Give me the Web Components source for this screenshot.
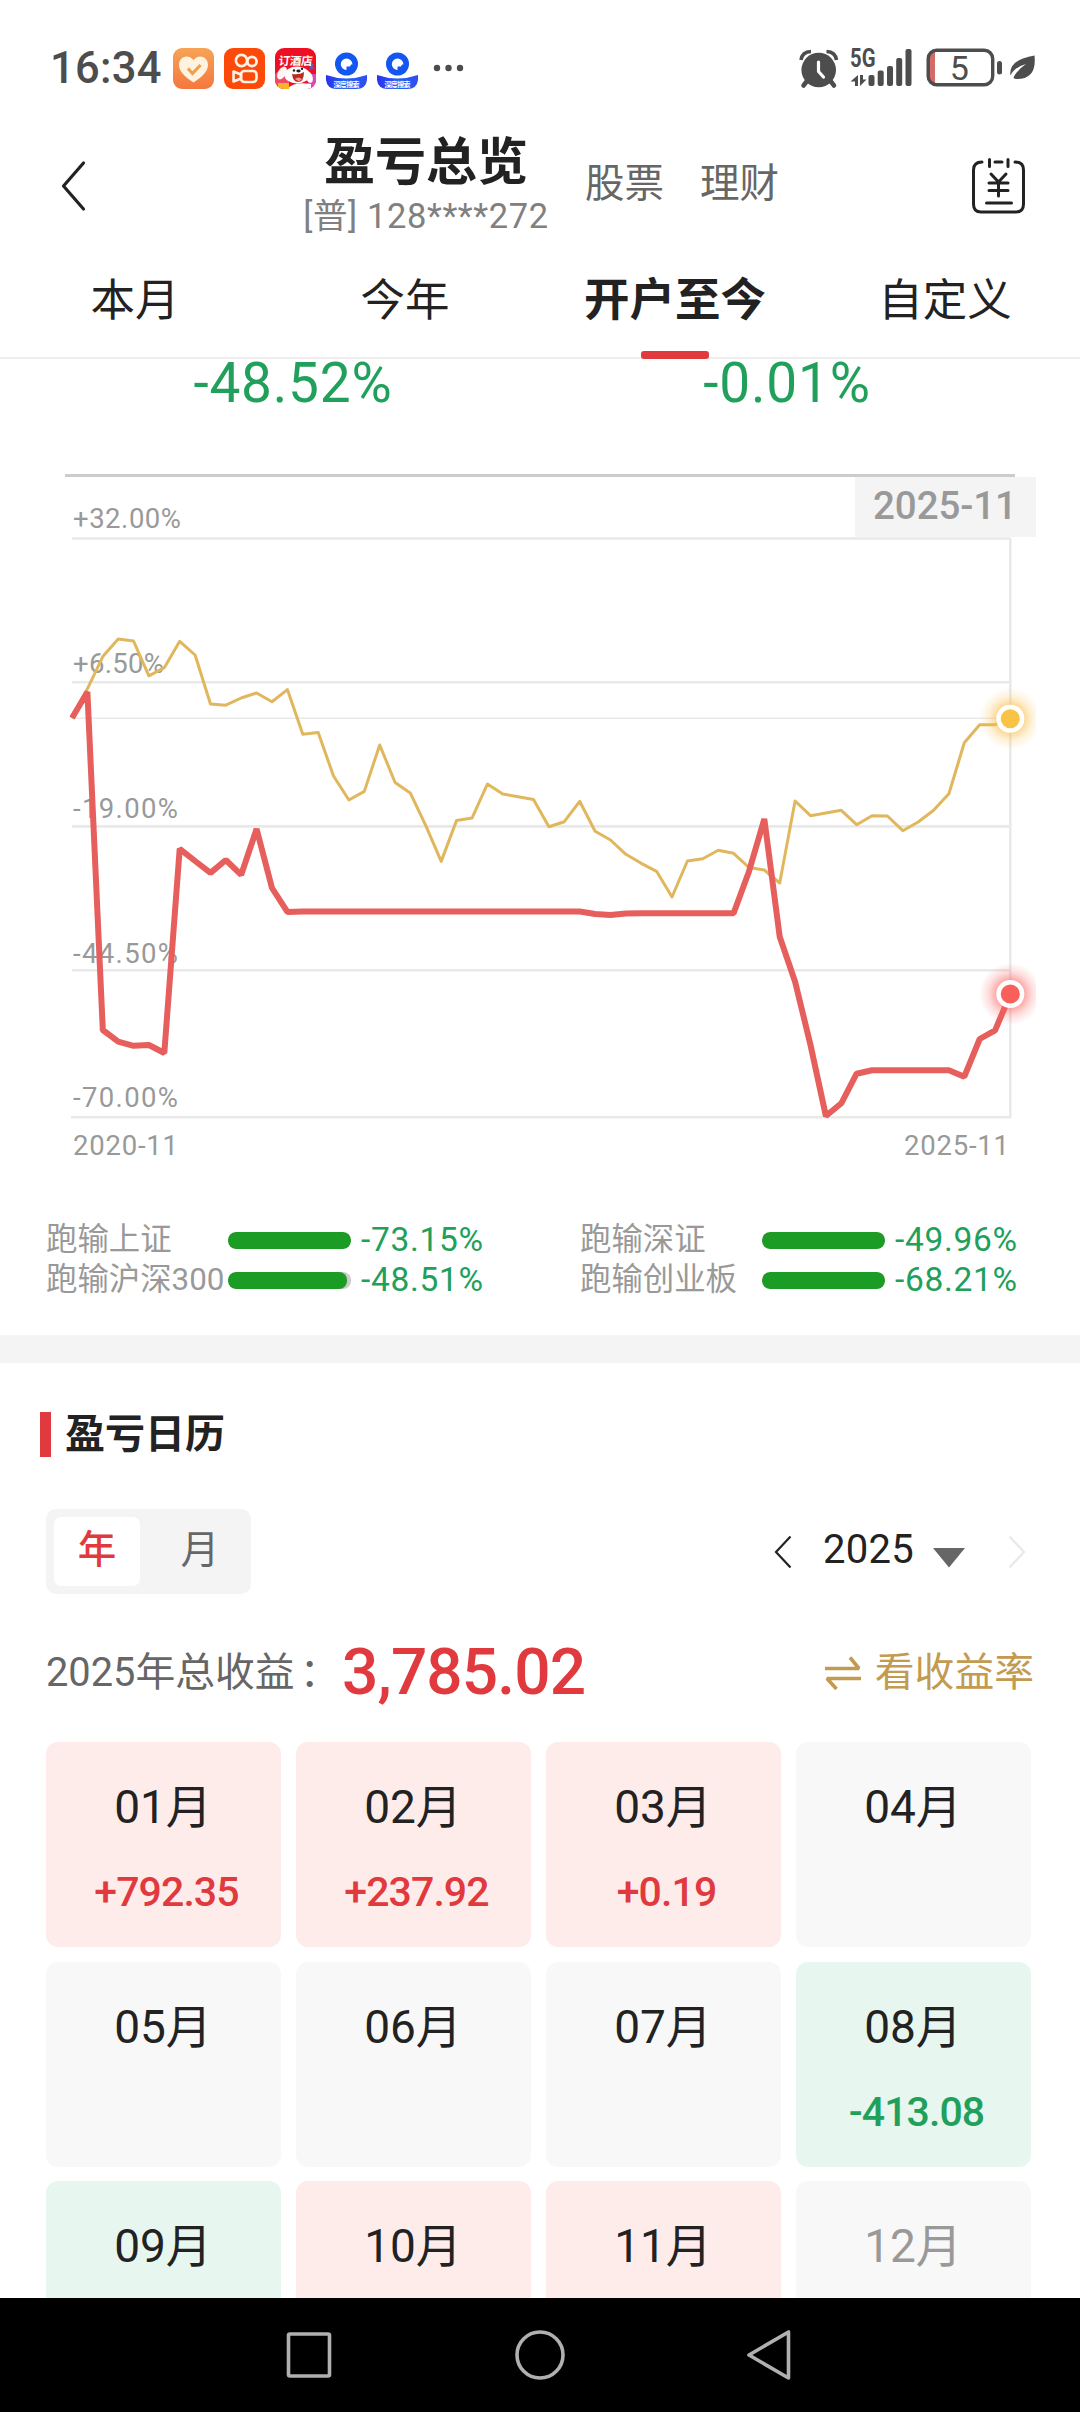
<!DOCTYPE html>
<html lang="zh-CN">
<head>
<meta charset="utf-8">
<title>盈亏总览</title>
<style>
  html, body {
    margin: 0;
    padding: 0;
  }
  body {
    width: 1080px;
    height: 2412px;
    overflow: hidden;
    background: #fff;
    color: #222;
    font-family: Roboto, "Noto Sans CJK SC", sans-serif;
    --red: #e0393e;
    --green: #21a05b;
    --gray: #999;
  }
</style>
</head>
<body>
<profit-app></profit-app>

<script>
// shared base: every element only supplies its markup
class BaseElement extends HTMLElement {
  connectedCallback() {
    if (this.shadowRoot) return;
    this.attachShadow({ mode: 'open' });
    this.shadowRoot.innerHTML = this.render();
  }
}

class AppBadge extends BaseElement {
  render() {
    const icons = {
      heart: `
        <defs><linearGradient id="g" x1="0" y1="0" x2="0" y2="1"><stop offset="0" stop-color="#f7a356"/><stop offset="1" stop-color="#f4783f"/></linearGradient></defs>
        <rect width="41" height="41" rx="9" fill="url(#g)"/>
        <path d="M20.5 34.5C15 31 6 24.500 6 17C6 12 9.500 8.500 13.500 8.500C16.500 8.500 19 10 20.500 12.300C22 10 24.500 8.500 27.500 8.500C31.500 8.500 35 12 35 17C35 24.500 26 31 20.500 34.500Z" fill="#fff3e0"/>
        <path d="M15 20.500l4.500 5L27.500 17" fill="none" stroke="#f0a04c" stroke-width="3.200"/>`,
      video: `
        <rect width="41" height="41" rx="9" fill="#fd4a08"/>
        <g fill="none" stroke="#fff3e6" stroke-width="2.600">
          <circle cx="17.500" cy="12.500" r="5.600"/><circle cx="28" cy="13.500" r="4.600"/>
          <rect x="17" y="23" width="15.500" height="11" rx="3.500"/>
          <path d="M9.500 23.500v10l7.500-3v-4z" stroke-linejoin="round"/>
        </g>`,
      hotel: `
        <defs><clipPath id="c"><rect width="41" height="41" rx="9"/></clipPath></defs>
        <g clip-path="url(#c)">
          <rect width="41" height="41" fill="#ee1022"/>
          <path d="M0 26Q6 20 14 22V41H0Z" fill="#f24a62"/>
          <path d="M33 26h8v15h-8z" fill="#d84bb0"/>
          <ellipse cx="22" cy="27" rx="12.500" ry="8.500" fill="#fff"/>
          <ellipse cx="7" cy="25" rx="4" ry="7" transform="rotate(30 7 25)" fill="#fff5f5"/>
          <ellipse cx="34" cy="29" rx="3.500" ry="6" transform="rotate(-20 34 29)" fill="#fff"/>
          <path d="M12 41q7-8 24-5v5z" fill="#fff"/>
          <path d="M17 26q8 1 12-2q0 10-6 10q-5 0-6-8z" fill="#b92b22"/>
          <path d="M20 31q3-3 7 0l-3 2.500z" fill="#f59a8a"/>
          <circle cx="19" cy="22.500" r="1.200" fill="#222"/><circle cx="27" cy="20.800" r="1.200" fill="#222"/><ellipse cx="23.500" cy="23" rx="2.200" ry="1.400" fill="#222"/>
          <path d="M3 35h11v6H3z" fill="#f7b52c"/>
          <path d="M34 17l5 4M38 16l-3 6" stroke="#5a63c8" stroke-width="1.500"/>
          <text x="20" y="17" text-anchor="middle" font-size="11.500" font-weight="700" textLength="34" fill="#fff" transform="skewX(-6) translate(2 0)">订酒店</text>
        </g>`,
      search: `
        <defs><linearGradient id="s" x1="0" y1="0" x2="1" y2="0"><stop offset="0" stop-color="#2a31ee"/><stop offset=".5" stop-color="#2563f2"/><stop offset="1" stop-color="#2f4df0"/></linearGradient></defs>
        <circle cx="20.500" cy="16" r="11.500" fill="#1257f0"/>
        <path d="M20.500 10.500a5.700 5.700 0 1 0 0 11.400v-3.500h3.500l1-2h1.500a6 6 0 0 0-6-5.900z" fill="#fff"/>
        <path d="M0 27Q20.500 34 41 27V32Q40 41 30 41H11Q1 41 0 32Z" fill="url(#s)"/>
        <text x="20.500" y="38.500" text-anchor="middle" font-size="7" font-weight="700" textLength="26" fill="#fff">深度搜索</text>`
    };
    return `
      <style>
        :host { display: block; width: 41px; height: 41px; }
        svg { display: block; overflow: visible; }
      </style>
      <svg width="41" height="41" viewBox="0 0 41 41">${icons[this.getAttribute('kind')]}</svg>
    `;
  }
}
customElements.define('app-badge', AppBadge);

class StatusBar extends BaseElement {
  render() {
    return `
      <style>
        :host {
          display: flex;
          align-items: center;
          box-sizing: border-box;
          height: 137px;
          padding: 0 43px 0 50px;
          color: #4d4d4d;
        }
        .time {
          font-size: 43.500px;
          font-weight: 500;
          letter-spacing: .3px;
          width: 123px;
        }
        .apps { display: flex; gap: 10px; }
        .dots { margin-left: 15px; }
        .system { margin-left: auto; }
        svg { display: block; overflow: visible; }
      </style>
      <span class="time">16:34</span>
      <div class="apps">
        <app-badge kind="heart"></app-badge>
        <app-badge kind="video"></app-badge>
        <app-badge kind="hotel"></app-badge>
        <app-badge kind="search"></app-badge>
        <app-badge kind="search"></app-badge>
      </div>
      <svg class="dots" width="32" height="8" viewBox="0 0 32 8" fill="#4d4d4d"><circle cx="4" cy="3" r="3.200"/><circle cx="15.500" cy="3" r="3.200"/><circle cx="27" cy="3" r="3.200"/></svg>
      <svg class="system" width="237" height="41" viewBox="800 48 237 41" fill="#4d4d4d">
        <!-- alarm -->
        <circle cx="818.700" cy="70" r="17.300"/>
        <path d="M801 60Q802 52 811 51.500M836.500 60Q835.500 52 826.500 51.500" fill="none" stroke="#4d4d4d" stroke-width="3.500"/>
        <path d="M807 81l-3.500 4.500M830.500 81l3.500 4.500" stroke="#4d4d4d" stroke-width="4.500" stroke-linecap="round"/>
        <path d="M818.500 62v9.500l5 5.500" fill="none" stroke="#fff" stroke-width="3.200" stroke-linecap="round" stroke-linejoin="round"/>
        <!-- signal -->
        <text x="850" y="67" font-size="25" font-weight="700" textLength="25.500" lengthAdjust="spacingAndGlyphs">5G</text>
        <path d="M858 75v11h-3v-4.500H850.500zM860 75v11l6.500-6.500h-3.500V75z"/>
        <rect x="868.500" y="75" width="6" height="11" rx="2"/><rect x="877.700" y="70.500" width="6" height="15.500" rx="2"/><rect x="887" y="66" width="6" height="20" rx="2"/><rect x="896.200" y="58" width="6" height="28" rx="2"/><rect x="905.500" y="49" width="6" height="37" rx="2"/>
        <!-- battery -->
        <path d="M929 52h6v31h-6z" fill="#d46a69"/>
        <rect x="928.200" y="50.200" width="64.500" height="34.500" rx="8.500" fill="none" stroke="#4d4d4d" stroke-width="3.400"/>
        <text x="959.300" y="79.500" font-size="34" text-anchor="middle">5</text>
        <rect x="997" y="61" width="5" height="13.500" rx="2.500"/>
        <!-- power saving leaf -->
        <path d="M1034.500 55.500Q1037 79 1017 79Q1014 79 1013.500 77.500Q1017 70 1026 64Q1014 67.500 1010.500 75.500Q1008 60 1034.500 55.500Z"/>
      </svg>
    `;
  }
}
customElements.define('status-bar', StatusBar);

class PageHeader extends BaseElement {
  render() {
    return `
      <style>
        :host {
          display: flex;
          align-items: center;
          box-sizing: border-box;
          height: 98px;
          padding: 0 54px 0 60px;
        }
        .account {
          width: 248px;
          margin-left: 214px;
          padding-top: 6px;
          text-align: center;
          white-space: nowrap;
        }
        h1 {
          margin: 0;
          font-size: 51px;
          font-weight: 700;
          line-height: 50px;
        }
        p {
          margin: 3px 0 0;
          font-size: 34.500px;
          letter-spacing: .6px;
          line-height: 50px;
          color: #808080;
        }
        .link {
          margin: 0 0 4px 35px;
          font-size: 39.500px;
          line-height: 60px;
          color: #666;
        }
        .link + .link { margin-left: 36px; }
        .bill { margin-left: auto; }
        svg { display: block; }
      </style>
      <svg width="28" height="54" viewBox="0 0 28 54" fill="none" stroke="#222" stroke-width="3.200" stroke-linecap="round" stroke-linejoin="round"><path d="M23.500 4L3.500 27L23.500 50"/></svg>
      <div class="account">
        <h1>盈亏总览</h1>
        <p>[普] 128****272</p>
      </div>
      <span class="link">股票</span>
      <span class="link">理财</span>
      <svg class="bill" width="54" height="58" viewBox="972 157 54 58" fill="none" stroke="#222" stroke-width="3" stroke-linecap="round" stroke-linejoin="round">
        <path d="M982 162Q973.500 162 973.500 170V204Q973.500 212 981 212H1016Q1023.500 212 1023.500 204V170Q1023.500 162 1015 162M995 162h7M989.500 159.500v7M1008 159.500v7"/>
        <path d="M991 174l7.500 8l7.500-8M998.500 182v14M989 183h19M989 190.500h19M986.500 203h25"/>
      </svg>
    `;
  }
}
customElements.define('page-header', PageHeader);

class PeriodTab extends BaseElement {
  render() {
    return `
      <style>
        :host {
          display: block;
          position: relative;
          height: 124px;
          line-height: 132px;
          text-align: center;
          font-size: 44.500px;
        }
        :host([active]) {
          font-size: 45.500px;
          font-weight: 700;
        }
        :host([active])::after {
          content: '';
          position: absolute;
          left: 50%;
          bottom: 0;
          width: 68px;
          height: 8px;
          margin-left: -34px;
          border-radius: 3px;
          background: var(--red);
        }
      </style>
      <slot></slot>
    `;
  }
}
customElements.define('period-tab', PeriodTab);

class PeriodTabs extends BaseElement {
  render() {
    return `
      <style>
        :host {
          display: grid;
          grid-template-columns: repeat(4, 270px);
          height: 124px;
          box-shadow: inset 0 -2px #eee;
        }
      </style>
      <slot></slot>
    `;
  }
}
customElements.define('period-tabs', PeriodTabs);

class TrendChart extends BaseElement {
  render() {
    const mine = [718, 692, 1030, 1041.6, 1045.8, 1045, 1053, 848.8, 861, 872.9, 860, 874.8, 829, 888, 911.9,
      ...Array(19).fill(911.5), 914, 915, 913.5, ...Array(7).fill(913.3), 871.7, 819, 936.7, 981.7, 1045, 1116,
      1103.3, 1073.7, 1070.3, 1070.3, 1070.3, 1070.3, 1070.3, 1070.3, 1076.7, 1039, 1030.3, 994];
    const index = [718, 688.8, 656.6, 639, 641, 675.8, 667.7, 641.3, 655, 704, 705.2, 698, 693, 701.8, 689.6,
      734.3, 732.4, 776, 800, 791.4, 745, 782.5, 793.3, 825.8, 861.4, 820.4, 818.1, 784, 794, 796.7, 799.4,
      826.7, 821.7, 801.3, 831.3, 840, 854.3, 863.3, 871.3, 897, 861, 858.7, 850.3, 853.3, 867.5, 870, 883,
      801, 815.7, 813, 810.3, 824.7, 815.7, 816, 830.7, 822, 810.3, 793.7, 742.7, 724.7, 724.7, 718.7];
    const points = list => list.map((y, i) => `${(72 + i * 15.385).toFixed(1)},${y}`).join(' ');
    const ticks = [
      ['+32.00%', 528, 108], ['+6.50%', 673, 91], ['-19.00%', 818, 105], ['-44.50%', 963, 105], ['-70.00%', 1107, 105]
    ];
    return `
      <style>
        :host { display: block; height: 773px; }
        svg { display: block; }
        text { fill: var(--gray); }
      </style>
      <svg width="1080" height="773" viewBox="0 407 1080 773">
        <defs>
          <radialGradient id="gy"><stop offset=".4" stop-color="#f9b93c" stop-opacity=".6"/><stop offset=".7" stop-color="#f9b93c" stop-opacity=".2"/><stop offset="1" stop-color="#f9b93c" stop-opacity="0"/></radialGradient>
          <radialGradient id="gr"><stop offset=".4" stop-color="#f9605c" stop-opacity=".6"/><stop offset=".7" stop-color="#f9605c" stop-opacity=".22"/><stop offset="1" stop-color="#f9605c" stop-opacity="0"/></radialGradient>
          <clipPath id="edge"><rect x="900" y="600" width="136" height="500"/></clipPath>
        </defs>
        <rect x="65" y="474" width="950" height="3" fill="#ccc"/>
        <g fill="none" stroke="#e9e9e9" stroke-width="2.600">
          <path d="M72 538.500H1010M72 682.300H1010M72 826.400H1010M72 970.300H1010M71 1117.300H1011M1010.300 538V1118"/>
          <path d="M72 718.300H1010" stroke-width="1.400"/>
        </g>
        ${ticks.map(t => `<text x="73" y="${t[1]}" font-size="27.500" textLength="${t[2]}">${t[0]}</text>`).join('')}
        <text x="73" y="1154.500" font-size="27.500" textLength="105">2020-11</text>
        <text x="904" y="1154.500" font-size="27.500" textLength="105">2025-11</text>
        <rect x="855" y="477" width="181" height="60" fill="#f4f4f4"/>
        <text x="873" y="518.500" font-size="38.500" font-weight="500" textLength="144">2025-11</text>
        <polyline points="${points(index)}" fill="none" stroke="#e0b75c" stroke-width="3" stroke-linejoin="round"/>
        <polyline points="${points(mine)}" fill="none" stroke="#e65f5c" stroke-width="6" stroke-linejoin="bevel"/>
        <g clip-path="url(#edge)">
          <circle cx="1010.300" cy="718.700" r="31" fill="url(#gy)"/>
          <circle cx="1010.300" cy="994" r="31" fill="url(#gr)"/>
        </g>
        <g stroke="#fff" stroke-width="4.500">
          <circle cx="1010.300" cy="718.700" r="11.800" fill="#f9c346"/>
          <circle cx="1010.300" cy="994" r="11.800" fill="#f9605c"/>
        </g>
      </svg>
    `;
  }
}
customElements.define('trend-chart', TrendChart);

class BenchmarkRow extends BaseElement {
  render() {
    return `
      <style>
        :host {
          display: flex;
          align-items: center;
          height: 40px;
          line-height: 40px;
          white-space: nowrap;
        }
        .name {
          width: 182px;
          font-size: 31.400px;
          color: var(--gray);
        }
        .bar {
          width: 123px;
          height: 17px;
          border-radius: 8px;
          overflow: hidden;
          background: #ccc;
        }
        .bar i {
          display: block;
          height: 17px;
          width: ${this.getAttribute('fill') || 100}%;
          border-radius: 8px;
          background: #1b9c24;
        }
        .value {
          margin-left: 10px;
          font-size: 33.500px;
          letter-spacing: .7px;
          color: var(--green);
        }
      </style>
      <span class="name"><slot></slot></span>
      <div class="bar"><i></i></div>
      <span class="value">${this.getAttribute('value')}</span>
    `;
  }
}
customElements.define('benchmark-row', BenchmarkRow);

class SectionTitle extends BaseElement {
  render() {
    return `
      <style>
        :host {
          display: flex;
          align-items: center;
          gap: 14px;
          height: 45px;
          margin: 49px 0 0 40px;
          line-height: 43px;
          font-size: 40px;
          font-weight: 700;
        }
        i { width: 11px; height: 45px; background: var(--red); }
      </style>
      <i></i><slot></slot>
    `;
  }
}
customElements.define('section-title', SectionTitle);

class CalendarToolbar extends BaseElement {
  render() {
    return `
      <style>
        :host {
          display: flex;
          align-items: center;
          justify-content: space-between;
          margin: 52px 54px 0 46px;
        }
        .switch {
          display: flex;
          box-sizing: border-box;
          width: 205px;
          height: 85px;
          padding: 8px;
          border-radius: 10px;
          background: #f4f4f4;
          font-size: 38.500px;
          line-height: 66px;
          text-align: center;
          color: #666;
        }
        .switch span { width: 86px; border-radius: 7px; }
        .switch .on { background: #fff; color: var(--red); font-weight: 500; }
        .switch span + span { margin-left: 17px; }
        .year {
          display: flex;
          align-items: center;
          font-size: 40px;
        }
        .year span { margin: 0 19px 3px 31px; line-height: 80px; letter-spacing: .3px; }
        .caret { margin: 12px 43px 0 0; }
        svg { display: block; }
      </style>
      <div class="switch"><span class="on">年</span><span>月</span></div>
      <div class="year">
        <svg width="18" height="34" viewBox="0 0 18 34" fill="none" stroke="#222" stroke-width="2.200"><path d="M16.500 1.500L2 17L16.500 32.500"/></svg>
        <span>2025</span>
        <svg class="caret" width="32" height="20" viewBox="0 0 32 20"><path d="M0 0H32L16 19.500Z" fill="#666"/></svg>
        <svg width="18" height="34" viewBox="0 0 18 34" fill="none" stroke="#e9e9e9" stroke-width="2.200"><path d="M1.500 1.500L16 17L1.500 32.500"/></svg>
      </div>
    `;
  }
}
customElements.define('calendar-toolbar', CalendarToolbar);

class YearSummary extends BaseElement {
  render() {
    return `
      <style>
        :host {
          display: flex;
          align-items: center;
          height: 60px;
          margin: 49px 46px 0;
          font-size: 39.800px;
          line-height: 60px;
          color: #666;
          white-space: nowrap;
        }
        .label { width: 296px; }
        .colon { margin-left: 5px; }
        .total { font-size: 64px; font-weight: 500; color: var(--red); letter-spacing: -.9px; }
        .rate {
          display: flex;
          align-items: center;
          gap: 13px;
          margin-left: auto;
          color: #c29a50;
        }
        svg { display: block; }
      </style>
      <span class="label">2025年总收益<span class="colon">：</span></span>
      <span class="total">3,785.02</span>
      <span class="rate">
        <svg width="38" height="34" viewBox="0 0 38 34" fill="none" stroke="#c29a50" stroke-width="3.600" stroke-linejoin="bevel"><path d="M1 12.500H35L26 1.500M37 22.500H3L12.500 33"/></svg>
        看收益率
      </span>
    `;
  }
}
customElements.define('year-summary', YearSummary);

class MonthCard extends BaseElement {
  render() {
    return `
      <style>
        :host {
          display: block;
          height: 205px;
          border-radius: 12px;
          background: #f8f8f8;
          text-align: center;
        }
        :host([trend="up"]) { background: #feeceb; color: var(--red); }
        :host([trend="down"]) { background: #e7f7ef; color: var(--green); }
        .month {
          padding: 35px 1px 0 0;
          font-size: 46px;
          line-height: 60px;
          color: #222;
        }
        :host([future]) .month { color: var(--gray); }
        .value {
          padding: 27px 0 0 6px;
          font-size: 41px;
          font-weight: 500;
          letter-spacing: -.9px;
          line-height: 56px;
        }
      </style>
      <div class="month"><slot></slot></div>
      <div class="value">${this.getAttribute('value') || ''}</div>
    `;
  }
}
customElements.define('month-card', MonthCard);

class NavBar extends BaseElement {
  render() {
    return `
      <style>
        :host {
          display: flex;
          align-items: center;
          justify-content: center;
          gap: 180px;
          height: 114px;
          background: #000;
        }
        svg { display: block; }
      </style>
      <svg width="50" height="52" viewBox="0 0 50 52"><rect x="3.500" y="5" width="41" height="42" rx="1.500" fill="none" stroke="#b0b0b0" stroke-width="3.600"/></svg>
      <svg width="50" height="52" viewBox="0 0 50 52"><circle cx="25" cy="26" r="23" fill="none" stroke="#b0b0b0" stroke-width="3.600"/></svg>
      <svg width="50" height="52" viewBox="0 0 50 52"><path d="M43.500 3V49L4 26Z" fill="none" stroke="#b0b0b0" stroke-width="3.600" stroke-linejoin="round"/></svg>
    `;
  }
}
customElements.define('nav-bar', NavBar);

class ProfitApp extends BaseElement {
  render() {
    const months = [
      ['01月', 'up', '+792.35'], ['02月', 'up', '+237.92'], ['03月', 'up', '+0.19'], ['04月'],
      ['05月'], ['06月'], ['07月'], ['08月', 'down', '-413.08'],
      ['09月', 'down'], ['10月', 'up'], ['11月', 'up'], ['12月', 'future']
    ];
    const card = ([name, state, value]) => {
      const attr = state === 'future' ? 'future' : state ? `trend="${state}"` : '';
      return `<month-card ${attr} ${value ? `value="${value}"` : ''}>${name}</month-card>`;
    };
    return `
      <style>
        :host {
          display: flex;
          flex-direction: column;
          width: 1080px;
          height: 2412px;
          overflow: hidden;
        }
        main { flex: 1; min-height: 0; }
        /* the last row of months runs under the system bar */
        nav-bar { position: relative; z-index: 1; }
        .rates {
          display: grid;
          grid-template-columns: 586px 402px;
          height: 48px;
          line-height: 49px;
          text-align: center;
          font-size: 55px;
          letter-spacing: .8px;
          color: var(--green);
        }
        .benchmarks {
          display: grid;
          grid-template-columns: 534px 1fr;
          padding: 40px 46px 35px;
        }
        .band { height: 28px; background: #f4f4f4; }
        .months {
          display: grid;
          grid-template-columns: repeat(4, 235px);
          column-gap: 15px;
          row-gap: 14.600px;
          margin: 39px 46px 0;
        }
      </style>
      <status-bar></status-bar>
      <page-header></page-header>
      <period-tabs>
        <period-tab>本月</period-tab>
        <period-tab>今年</period-tab>
        <period-tab active>开户至今</period-tab>
        <period-tab>自定义</period-tab>
      </period-tabs>
      <main>
        <div class="rates"><span>-48.52%</span><span>-0.01%</span></div>
        <trend-chart></trend-chart>
        <div class="benchmarks">
          <benchmark-row value="-73.15%">跑输上证</benchmark-row>
          <benchmark-row value="-49.96%">跑输深证</benchmark-row>
          <benchmark-row value="-48.51%" fill="97">跑输沪深300</benchmark-row>
          <benchmark-row value="-68.21%">跑输创业板</benchmark-row>
        </div>
        <div class="band"></div>
        <section-title>盈亏日历</section-title>
        <calendar-toolbar></calendar-toolbar>
        <year-summary></year-summary>
        <div class="months">${months.map(card).join('')}</div>
      </main>
      <nav-bar></nav-bar>
    `;
  }
}
customElements.define('profit-app', ProfitApp);
</script>
</body>
</html>
